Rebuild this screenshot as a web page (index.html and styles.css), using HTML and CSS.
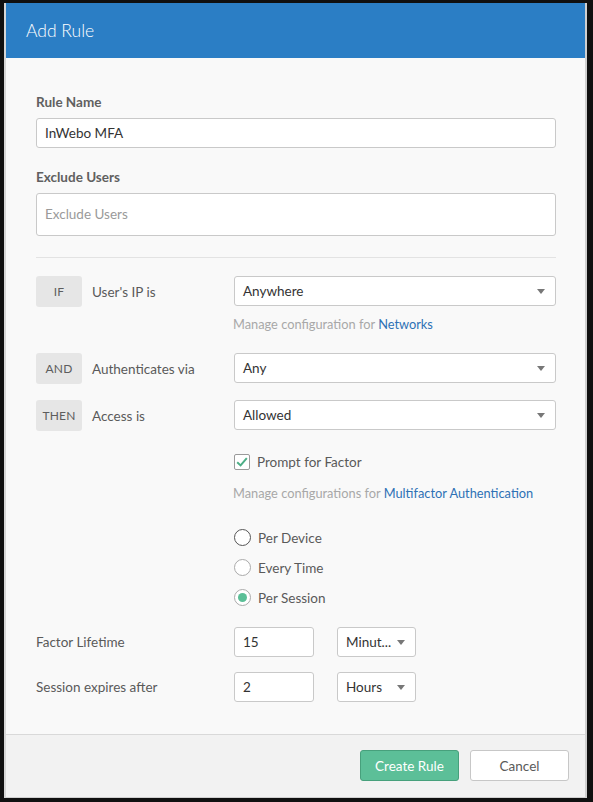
FILE: index.html
```html
<!DOCTYPE html>
<html>
<head>
<meta charset="utf-8">
<link rel="stylesheet" href="styles.css">
</head>
<body>
<div class="modal">
  <div class="modal-header">Add Rule</div>
  <div class="modal-body">
    <div class="field">
      <label class="field-label">Rule Name</label>
      <div class="input">InWebo MFA</div>
    </div>
    <div class="field field-second">
      <label class="field-label">Exclude Users</label>
      <div class="textarea placeholder">Exclude Users</div>
    </div>
    <hr class="divider">

    <div class="cond-row row-if">
      <div class="cond-left"><span class="badge">IF</span><span class="cond-label">User's IP is</span></div>
      <div class="select"><span>Anywhere</span><span class="caret"></span></div>
    </div>
    <div class="help help-net">Manage configuration for <a class="link">Networks</a></div>

    <div class="cond-row row-and">
      <div class="cond-left"><span class="badge">AND</span><span class="cond-label">Authenticates via</span></div>
      <div class="select"><span>Any</span><span class="caret"></span></div>
    </div>

    <div class="cond-row row-then">
      <div class="cond-left"><span class="badge">THEN</span><span class="cond-label">Access is</span></div>
      <div class="select"><span>Allowed</span><span class="caret"></span></div>
    </div>

    <div class="indent">
      <div class="check-row">
        <span class="checkbox"><svg width="14" height="14" viewBox="0 0 14 14"><path d="M2.2 7.2 L5.6 10.4 L11.8 3.2" fill="none" stroke="#4cae86" stroke-width="2"/></svg></span>
        <span class="opt-text">Prompt for Factor</span>
      </div>
      <div class="help help-mfa">Manage configurations for <a class="link">Multifactor Authentication</a></div>
      <div class="radios">
        <div class="radio-row"><span class="radio radio-focus"></span><span class="opt-text">Per Device</span></div>
        <div class="radio-row"><span class="radio"></span><span class="opt-text">Every Time</span></div>
        <div class="radio-row"><span class="radio radio-on"><span class="dot"></span></span><span class="opt-text">Per Session</span></div>
      </div>
    </div>

    <div class="time-row row-factor">
      <div class="time-label">Factor Lifetime</div>
      <div class="small-input">15</div>
      <div class="small-select"><span>Minut...</span><span class="caret"></span></div>
    </div>
    <div class="time-row row-session">
      <div class="time-label">Session expires after</div>
      <div class="small-input">2</div>
      <div class="small-select"><span>Hours</span><span class="caret"></span></div>
    </div>
  </div>
  <div class="modal-footer">
    <button class="btn btn-primary">Create Rule</button>
    <button class="btn btn-default">Cancel</button>
  </div>
</div>
</body>
</html>
```

FILE: styles.css
```css
* { box-sizing: border-box; }
html, body { margin: 0; padding: 0; }
body {
  background: #101010;
  font-family: "Lato", "Liberation Sans", Arial, sans-serif;
  font-size: 13.5px;
  color: #5d5d5d;
  width: 593px;
  height: 802px;
  overflow: hidden;
  padding: 3px 0 0 4px;
}
.modal {
  width: 583px;
  height: 795px;
  border-left: 2px solid #d6d6d6;
  border-right: 2px solid #d0d0d0;
  border-bottom: 1px solid #d0d0d0;
  background: #f9f9f9;
  display: flex;
  flex-direction: column;
}
.modal-header {
  height: 55px;
  background: #2b7ec5;
  color: #fff;
  font-size: 17.5px;
  font-weight: 300;
  padding-left: 20px;
  display: flex;
  align-items: center;
  flex-shrink: 0;
}
.modal-body {
  flex: 1;
  padding: 36px 29px 0 30px;
}
.field-label {
  display: block;
  font-weight: bold;
  line-height: 16px;
  margin-bottom: 8px;
  color: #606060;
}
.field-second { margin-top: 21px; }
.input, .textarea, .select, .small-input, .small-select {
  background: #fff;
  border: 1px solid #c9c9c9;
  border-radius: 3px;
  color: #333;
}
.input {
  height: 30px;
  padding: 0 8px;
  line-height: 28px;
}
.textarea {
  height: 43px;
  padding: 0 8px;
  line-height: 41px;
}
.placeholder { color: #9a9a9a; }
.divider {
  border: 0;
  border-top: 1px solid #e3e3e3;
  margin: 21px 0 18px 0;
  height: 0;
}
.cond-row {
  display: flex;
  align-items: center;
  height: 31px;
}
.cond-left {
  width: 198px;
  display: flex;
  align-items: center;
}
.badge {
  width: 46px;
  height: 31px;
  background: #e6e6e6;
  border-radius: 3px;
  color: #5d5d5d;
  font-size: 12px;
  display: flex;
  align-items: center;
  justify-content: center;
  margin-right: 10px;
  letter-spacing: 0.2px;
}
.cond-label { color: #5a5a5a; }
.select {
  width: 322px;
  height: 30px;
  padding: 0 8px;
  display: flex;
  align-items: center;
  justify-content: space-between;
  margin-top: -1px;
}
.caret {
  width: 0;
  height: 0;
  border-left: 4px solid transparent;
  border-right: 4px solid transparent;
  border-top: 5px solid #777;
  margin-right: 2px;
}
.help {
  margin-left: 197px;
  color: #a8a8a8;
  line-height: 16px;
  font-size: 12.8px;
}
.link { color: #2e71b5; }
.help-net { margin-top: 9px; }
.row-and { margin-top: 21px; }
.row-then { margin-top: 16px; }
.indent { margin-left: 198px; }
.check-row {
  display: flex;
  align-items: center;
  margin-top: 22px;
  height: 17px;
}
.checkbox {
  width: 16px;
  height: 16px;
  border: 1px solid #9a9a9a;
  border-radius: 2px;
  background: #fff;
  display: flex;
  align-items: center;
  justify-content: center;
  margin-right: 7px;
}
.opt-text { color: #5a5a5a; }
.indent .help { margin-left: -1px; }
.help-mfa { margin-top: 15px; }
.radios { margin-top: 28px; }
.radio-row {
  display: flex;
  align-items: center;
  height: 17px;
  margin-bottom: 13px;
}
.radio {
  width: 17px;
  height: 17px;
  border-radius: 50%;
  border: 1px solid #aaa;
  background: #fff;
  margin-right: 7px;
  display: flex;
  align-items: center;
  justify-content: center;
}
.radio-focus { border: 1.5px solid #555; }
.dot {
  width: 9px;
  height: 9px;
  border-radius: 50%;
  background: #5bbf97;
}
.time-row {
  display: flex;
  align-items: center;
  height: 30px;
}
.row-factor { margin-top: 21px; }
.row-session { margin-top: 15px; }
.time-label {
  width: 198px;
  color: #5a5a5a;
}
.small-input {
  width: 80px;
  height: 30px;
  padding: 0 8px;
  line-height: 28px;
}
.small-select {
  width: 79px;
  height: 30px;
  margin-left: 23px;
  padding: 0 8px;
  display: flex;
  align-items: center;
  justify-content: space-between;
}
.modal-footer {
  height: 63px;
  flex-shrink: 0;
  background: #f2f2f2;
  border-top: 1px solid #d9d9d9;
  display: flex;
  align-items: center;
  justify-content: flex-end;
  gap: 11px;
  padding-right: 16px;
  padding-bottom: 1px;
}
.btn {
  width: 99px;
  height: 31px;
  border-radius: 3px;
  font-family: inherit;
  font-size: 13.5px;
  cursor: pointer;
}
.btn-primary {
  background: #5cbf98;
  border: 1px solid #47a07c;
  color: #fff;
}
.btn-default {
  background: #fff;
  border: 1px solid #c7c7c7;
  color: #5a5a5a;
}
```
